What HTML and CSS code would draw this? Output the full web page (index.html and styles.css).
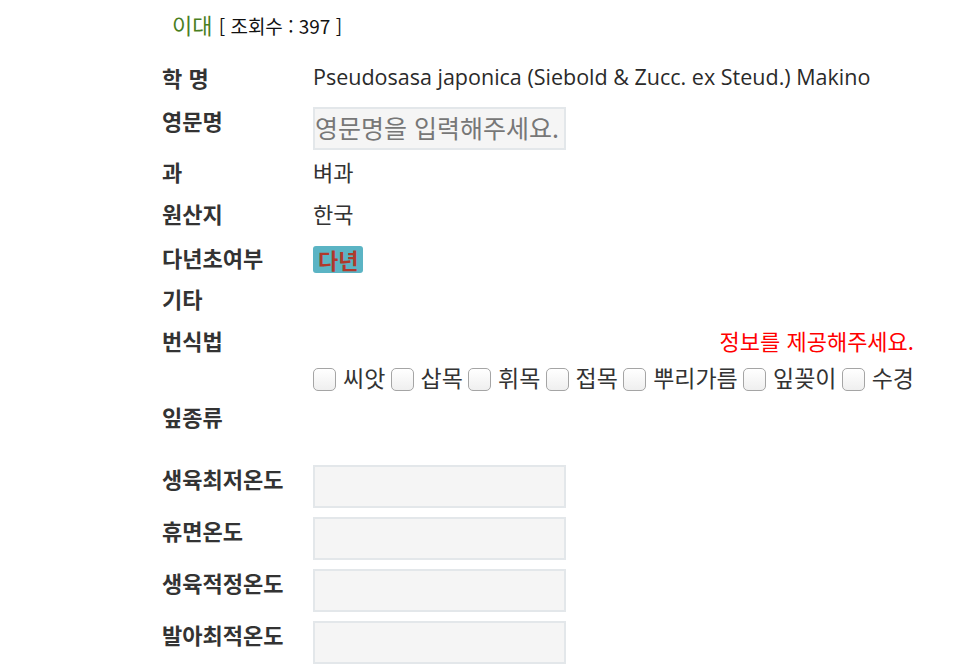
FILE: index.html
```html
<!DOCTYPE html>
<html lang="ko">
<head>
<meta charset="utf-8">
<link rel="stylesheet" href="styles.css">
</head>
<body>
<div class="page">
  <h1 class="title"><span class="name">이대</span> <span class="views">[ 조회수 : 397 ]</span></h1>
  <div class="info">
    <div class="row r-sci"><div class="label">학 명</div><div class="value latin">Pseudosasa japonica (Siebold &amp; Zucc. ex Steud.) Makino</div></div>
    <div class="row r-eng"><div class="label">영문명</div><div class="value"><input class="field" type="text" placeholder="영문명을 입력해주세요."></div></div>
    <div class="row r-fam"><div class="label">과</div><div class="value">벼과</div></div>
    <div class="row r-origin"><div class="label">원산지</div><div class="value">한국</div></div>
    <div class="row r-peren"><div class="label">다년초여부</div><div class="value"><span class="badge">다년</span></div></div>
    <div class="row r-etc"><div class="label">기타</div><div class="value"></div></div>
    <div class="row r-prop"><div class="label">번식법</div>
      <div class="value">
        <div class="notice">정보를 제공해주세요.</div>
        <div class="checks">
          <label class="check"><span class="box"></span>씨앗</label>
          <label class="check"><span class="box"></span>삽목</label>
          <label class="check"><span class="box"></span>휘목</label>
          <label class="check"><span class="box"></span>접목</label>
          <label class="check"><span class="box"></span>뿌리가름</label>
          <label class="check"><span class="box"></span>잎꽂이</label>
          <label class="check"><span class="box"></span>수경</label>
        </div>
      </div>
    </div>
    <div class="row r-leaf"><div class="label">잎종류</div><div class="value"></div></div>
    <div class="row r-temp"><div class="label">생육최저온도</div><div class="value"><input class="field" type="text"></div></div>
    <div class="row r-temp"><div class="label">휴면온도</div><div class="value"><input class="field" type="text"></div></div>
    <div class="row r-temp"><div class="label">생육적정온도</div><div class="value"><input class="field" type="text"></div></div>
    <div class="row r-temp"><div class="label">발아최적온도</div><div class="value"><input class="field" type="text"></div></div>
  </div>
</div>
</body>
</html>
```
FILE: styles.css
```css
html, body {
  margin: 0;
  padding: 0;
  background: #fff;
}
body {
  font-family: "Noto Sans CJK KR", "Noto Sans", sans-serif;
  color: #333;
}
.page {
  margin-left: 162px;
  width: 752px;
  padding-top: 9px;
}
.title {
  margin: 0 0 0 10px;
  font-size: 22px;
  font-weight: normal;
  line-height: 30px;
  height: 30px;
  white-space: nowrap;
}
.name {
  color: #4a7f1f;
  font-size: 22px;
}
.views {
  color: #111;
  font-size: 19px;
}
.info {
  margin-top: 23px;
}
.row {
  display: grid;
  grid-template-columns: 151px 1fr;
  align-items: start;
  font-size: 22px;
  line-height: 30px;
}
.label {
  font-weight: bold;
  color: #333;
  height: 30px;
}
.value {
  color: #333;
  min-height: 30px;
}
.latin {
  font-family: "Open Sans", "Noto Sans CJK KR", sans-serif;
  font-size: 21.5px;
  color: #2a2a2a;
}
.field {
  display: block;
  box-sizing: border-box;
  width: 253px;
  height: 43px;
  border: 2px solid #e3e7ea;
  background: #f5f5f5;
  font-family: inherit;
  font-size: 25px;
  padding: 0 0 4px 0;
  margin: 0;
  color: #333;
}
.field::placeholder {
  color: #777;
}
.r-sci { margin-bottom: 15px; }
.r-eng { margin-bottom: 6px; }
.r-fam { margin-bottom: 12px; }
.r-origin { margin-bottom: 14px; }
.r-peren { margin-bottom: 10px; }
.r-etc { margin-bottom: 12px; }
.r-prop { margin-bottom: 9px; }
.r-leaf { margin-bottom: 34px; }
.r-temp { margin-bottom: 9px; }
.r-eng .label, .r-temp .label { margin-top: -2px; }
.badge {
  display: inline-block;
  background: #5bb4c4;
  color: #b0392c;
  font-weight: bold;
  border-radius: 3px;
  padding: 0 5px;
  line-height: 27px;
  vertical-align: top;
  margin-top: 4px;
}
.notice {
  text-align: right;
  color: #ff0000;
}
.checks {
  display: flex;
  justify-content: space-between;
  white-space: nowrap;
  margin-top: 7px;
  font-size: 23px;
}
.check {
  display: inline-flex;
  align-items: center;
  gap: 7px;
}
.box {
  display: block;
  box-sizing: border-box;
  width: 23px;
  height: 23px;
  border: 1px solid #a5a5a5;
  border-radius: 5px;
  background: linear-gradient(#fff, #efefef);
  margin-top: 5px;
}
```
